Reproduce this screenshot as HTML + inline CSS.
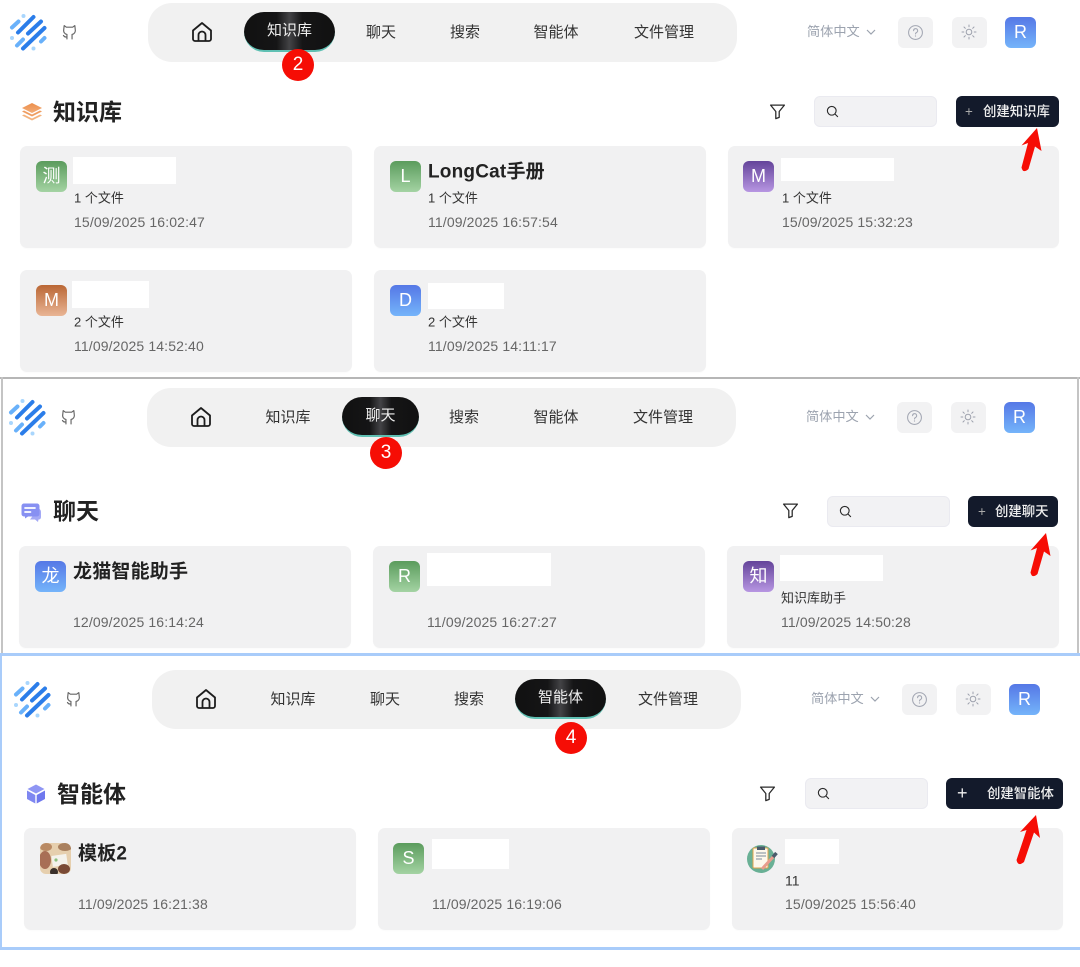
<!DOCTYPE html>
<html lang="zh"><head><meta charset="utf-8"><title>知识库</title>
<style>
html,body{margin:0;padding:0;background:#fff}
body{width:1080px;height:952px;position:relative;overflow:hidden;font-family:"Liberation Sans","Noto Sans CJK SC",sans-serif;color:#222}
.a,.a>*{position:absolute}
.a{left:0;top:0;width:1080px;height:300px}
.pill{left:148px;top:3px;width:589px;height:59px;background:#f1f1f1;border-radius:24px}
.n{top:22px;font-size:15px;line-height:20px;color:#333;transform:translate(-50%,1px);white-space:nowrap}
.act{top:12px;height:38px;border-radius:20px;background:linear-gradient(90deg,#111 0,#151516 36%,#434346 50%,#151516 64%,#111 100%);border-bottom:2px solid #5fc0b3;color:#eee;font-size:15px;line-height:38px;text-align:center}
.dot{width:32px;height:32px;border-radius:50%;background:#f60d05;color:#fff;font-size:19px;line-height:32px;text-align:center}
.lang{left:807px;top:22px;font-size:13.2px;line-height:20px;color:#9ca3af;white-space:nowrap}
.box{top:17px;width:35px;height:31px;background:#f2f2f3;border-radius:6px}
.r{left:1005px;top:17px;width:31px;height:31px;border-radius:6px;background:linear-gradient(180deg,#5578e6,#74b4fa);color:#fff;font-size:18px;line-height:31px;text-align:center}
.card{position:absolute;width:332px;height:102px;background:#f1f1f2;border-radius:7px;box-shadow:0 1px 1px rgba(0,0,0,.015)}
.av{position:absolute;width:31px;height:31px;border-radius:6px;color:#fff;font-size:18px;line-height:31px;text-align:center}
.g{background:linear-gradient(180deg,#5b9c5d,#a4d3a3)}
.p{background:linear-gradient(180deg,#64449a,#b796e2)}
.o{background:linear-gradient(180deg,#ba6735,#e9b595)}
.b{background:linear-gradient(180deg,#5578e6,#74b4fa)}
.w{position:absolute;background:#fff}
.ti{position:absolute;font-size:19px;font-weight:700;line-height:26px;color:#222;white-space:nowrap;letter-spacing:.2px;transform:translateY(1.5px)}
.m{position:absolute;font-size:13px;line-height:18px;color:#333;white-space:nowrap;transform:translateY(.5px)}
.d{position:absolute;font-size:14px;letter-spacing:.13px;line-height:18px;color:#666;white-space:nowrap}
.h{position:absolute;font-size:23px;font-weight:700;line-height:30px;color:#222;white-space:nowrap}
.s{position:absolute;width:123px;height:31px;box-sizing:border-box;background:#f2f2f4;border:1px solid #eaeaf0;border-radius:6px}
.btn{position:absolute;height:31px;background:#131a2b;border-radius:6px;color:#f0f0f0;font-size:13.4px;font-weight:500;line-height:31px;white-space:nowrap}
.btn span{position:absolute;top:0}
svg{position:absolute;overflow:visible}
</style></head><body>
<svg width="0" height="0" style="left:0;top:0">
<symbol id="logo" viewBox="0 0 50 60" overflow="visible"><g stroke-linecap="round" fill="none" stroke-width="4"><path d="M18 32.500 33.500 17M28 33.500 41 21.500M23 48.500 44.500 28" stroke="#2b7de9"/><path d="M12 27.500 18.500 21.500M17 45.500 23 39.500M41 41.500 44.500 38" stroke="#69b1fa"/></g><circle cx="23.500" cy="16" r="2" fill="#a9d6fd"/><circle cx="12" cy="38" r="2" fill="#a9d6fd"/><circle cx="33.500" cy="48.500" r="2" fill="#a9d6fd"/></symbol>
<symbol id="gh" viewBox="0 0 16 16" overflow="visible"><path d="M3 1.500 5 3h6l2-1.500.4 3.500c.6 2.500-.8 4.500-3 4.800V14M3 1.500 2.600 5c-.6 2.500.8 4.500 3 4.800V14M5.600 12C4 12.600 3 12 2.300 10.800" fill="none" stroke="#666" stroke-width="1.100" stroke-linejoin="round" stroke-linecap="round"/></symbol>
<symbol id="home" viewBox="0 0 22 22" overflow="visible"><path d="M2 9.500 11 2l9 7.500V18a2 2 0 0 1-2 2H4a2 2 0 0 1-2-2zM7.500 20v-6a3.500 3.500 0 0 1 7 0v6" fill="none" stroke="#1d1d1d" stroke-width="1.800" stroke-linejoin="round"/></symbol>
<symbol id="help" viewBox="0 0 16 16" overflow="visible"><circle cx="8" cy="8" r="6.500" fill="none" stroke="#a3a7b3" stroke-width="1"/><path d="M6.200 6.300A1.900 1.900 0 1 1 8.900 8c-.6.400-.9.700-.9 1.400" fill="none" stroke="#a3a7b3" stroke-width="1" stroke-linecap="round"/><circle cx="8" cy="11.300" r=".6" fill="#a3a7b3"/></symbol>
<symbol id="sun" viewBox="0 0 16 16" overflow="visible"><circle cx="8" cy="8" r="2.800" fill="none" stroke="#9ca0ac" stroke-width="1"/><path d="M8 1v1.800M8 13.200V15M1 8h1.800M13.200 8H15M3 3l1.300 1.300M11.700 11.700 13 13M3 13l1.300-1.300M11.700 4.300 13 3" stroke="#9ca0ac" stroke-width="1" stroke-linecap="round"/></symbol>
<symbol id="filter" viewBox="0 0 16 16" overflow="visible"><path d="M1.500 2h13L9.600 8v5.500l-3.200 1.200V8z" fill="none" stroke="#2a2a2a" stroke-width="1.200" stroke-linejoin="round"/></symbol>
<symbol id="search" viewBox="0 0 14 14" overflow="visible"><circle cx="6.200" cy="6.200" r="4.700" fill="none" stroke="#2a2a2a" stroke-width="1.200"/><path d="m9.800 9.800 2.700 2.700" stroke="#2a2a2a" stroke-width="1.200" stroke-linecap="round"/></symbol>
</svg>

<!-- Section borders -->
<div style="position:absolute;left:0;top:377px;width:1080px;height:2px;background:#b6b6b6"></div>
<div style="position:absolute;left:1px;top:377px;width:2px;height:277px;background:#c4c4c4"></div>
<div style="position:absolute;left:1077px;top:377px;width:2px;height:277px;background:#c4c4c4"></div>
<div style="position:absolute;left:0;top:653px;width:1080px;height:3px;background:#a9ccfa"></div>
<div style="position:absolute;left:0;top:653px;width:2px;height:297px;background:#a9ccfa"></div>
<div style="position:absolute;left:0;top:947px;width:1080px;height:3px;background:#a9ccfa"></div>

<!-- Header 1 -->
<div class="a">
<svg style="left:0;top:0" width="50" height="60"><use href="#logo" width="50" height="60"/></svg>
<svg style="left:61px;top:24px" width="17" height="17"><use href="#gh" width="17" height="17"/></svg>
<div class="pill"></div>
<svg style="left:191px;top:21px" width="22" height="22"><use href="#home" width="22" height="22"/></svg>
<div class="act" style="left:244px;width:91px">知识库</div>
<div class="n" style="left:381px">聊天</div><div class="n" style="left:465px">搜索</div><div class="n" style="left:556px">智能体</div><div class="n" style="left:664px">文件管理</div>
<div class="dot" style="left:282px;top:49px">2</div>
<div class="lang">简体中文</div><svg style="left:866px;top:29px" width="10" height="6"><path d="M1 1l4 4 4-4" fill="none" stroke="#9ca3af" stroke-width="1.200"/></svg>
<div class="box" style="left:898px"></div><svg style="left:907px;top:24px" width="17" height="17"><use href="#help" width="17" height="17"/></svg>
<div class="box" style="left:952px"></div><svg style="left:961px;top:24px" width="16" height="16"><use href="#sun" width="16" height="16"/></svg>
<div class="r">R</div>
</div>

<!-- Header 2 -->
<div class="a" style="left:-1px;top:385px">
<svg style="left:0;top:0" width="50" height="60"><use href="#logo" width="50" height="60"/></svg>
<svg style="left:61px;top:24px" width="17" height="17"><use href="#gh" width="17" height="17"/></svg>
<div class="pill"></div>
<svg style="left:191px;top:21px" width="22" height="22"><use href="#home" width="22" height="22"/></svg>
<div class="n" style="left:289px">知识库</div>
<div class="act" style="left:343px;width:77px">聊天</div>
<div class="n" style="left:465px">搜索</div><div class="n" style="left:557px">智能体</div><div class="n" style="left:664px">文件管理</div>
<div class="dot" style="left:371px;top:52px">3</div>
<div class="lang">简体中文</div><svg style="left:866px;top:29px" width="10" height="6"><path d="M1 1l4 4 4-4" fill="none" stroke="#9ca3af" stroke-width="1.200"/></svg>
<div class="box" style="left:898px"></div><svg style="left:907px;top:24px" width="17" height="17"><use href="#help" width="17" height="17"/></svg>
<div class="box" style="left:952px"></div><svg style="left:961px;top:24px" width="16" height="16"><use href="#sun" width="16" height="16"/></svg>
<div class="r">R</div>
</div>

<!-- Header 3 -->
<div class="a" style="left:4px;top:667px">
<svg style="left:0;top:0" width="50" height="60"><use href="#logo" width="50" height="60"/></svg>
<svg style="left:61px;top:24px" width="17" height="17"><use href="#gh" width="17" height="17"/></svg>
<div class="pill"></div>
<svg style="left:191px;top:21px" width="22" height="22"><use href="#home" width="22" height="22"/></svg>
<div class="n" style="left:289px">知识库</div><div class="n" style="left:381px">聊天</div><div class="n" style="left:465px">搜索</div>
<div class="act" style="left:511px;width:91px">智能体</div>
<div class="n" style="left:664px">文件管理</div>
<div class="dot" style="left:551px;top:55px">4</div>
<div class="lang">简体中文</div><svg style="left:866px;top:29px" width="10" height="6"><path d="M1 1l4 4 4-4" fill="none" stroke="#9ca3af" stroke-width="1.200"/></svg>
<div class="box" style="left:898px"></div><svg style="left:907px;top:24px" width="17" height="17"><use href="#help" width="17" height="17"/></svg>
<div class="box" style="left:952px"></div><svg style="left:961px;top:24px" width="16" height="16"><use href="#sun" width="16" height="16"/></svg>
<div class="r">R</div>
</div>

<!-- Page head 1 -->
<svg style="left:22px;top:103px" width="20" height="18" viewBox="0 0 20 18"><defs><linearGradient id="og" x1="0" y1="0" x2="0" y2="1"><stop offset="0" stop-color="#ec8f4c"/><stop offset="1" stop-color="#f3ac76"/></linearGradient></defs><path d="M10 0 20 5 10 10 0 5z" fill="url(#og)"/><path d="M2 7.500 0 8.500 10 13.500 20 8.500 18 7.500 10 11.500z" fill="#ef9d60"/><path d="M2 11.500 0 12.500 10 17.500 20 12.500 18 11.500 10 15.500z" fill="#f3b27d"/></svg>
<div class="h" style="left:53px;top:96.500px">知识库</div>
<svg style="left:769px;top:103px" width="17" height="17"><use href="#filter" width="17" height="17"/></svg>
<div class="s" style="left:814px;top:96px"></div><svg style="left:826px;top:105px" width="13" height="13"><use href="#search" width="13" height="13"/></svg>
<div class="btn" style="left:956px;top:96px;width:103px"><span style="left:9px;color:#aaa">+</span><span style="left:27px">创建知识库</span></div>

<!-- Cards 1 -->
<div class="card" style="left:20px;top:146px"></div>
<div class="card" style="left:374px;top:146px"></div>
<div class="card" style="left:728px;top:146px;width:331px"></div>
<div class="card" style="left:20px;top:270px"></div>
<div class="card" style="left:374px;top:270px"></div>
<div class="av g" style="left:36px;top:161px">测</div><div class="w" style="left:73px;top:157px;width:103px;height:27px"></div>
<div class="m" style="left:74px;top:189px">1 个文件</div><div class="d" style="left:74px;top:213px">15/09/2025 16:02:47</div>
<div class="av g" style="left:390px;top:161px">L</div><div class="ti" style="left:428px;top:158px">LongCat手册</div>
<div class="m" style="left:428px;top:189px">1 个文件</div><div class="d" style="left:428px;top:213px">11/09/2025 16:57:54</div>
<div class="av p" style="left:743px;top:161px">M</div><div class="w" style="left:781px;top:158px;width:113px;height:23px"></div>
<div class="m" style="left:782px;top:189px">1 个文件</div><div class="d" style="left:782px;top:213px">15/09/2025 15:32:23</div>
<div class="av o" style="left:36px;top:285px">M</div><div class="w" style="left:72px;top:281px;width:77px;height:27px"></div>
<div class="m" style="left:74px;top:313px">2 个文件</div><div class="d" style="left:74px;top:337px">11/09/2025 14:52:40</div>
<div class="av b" style="left:390px;top:285px">D</div><div class="w" style="left:428px;top:283px;width:76px;height:26px"></div>
<div class="m" style="left:428px;top:313px">2 个文件</div><div class="d" style="left:428px;top:337px">11/09/2025 14:11:17</div>

<!-- Page head 2 -->
<svg style="left:21px;top:503px" width="20" height="20" viewBox="0 0 20 20"><path d="M17 6h1.500Q20 7 20 9v5q0 2.500-2.500 2.500l-.5 2.500-3-2.500H9z" fill="#a4a9f5"/><path d="M3 .5h13A2.500 2.500 0 0 1 18.500 3v8A2.500 2.500 0 0 1 16 13.500H7l-3 2v-2H3A2.500 2.500 0 0 1 .5 11V3A2.500 2.500 0 0 1 3 .5z" fill="#8790f2"/><path d="M4 5h10M4 9h5.500" stroke="#fff" stroke-width="1.700" stroke-linecap="round"/></svg>
<div class="h" style="left:53px;top:495.500px">聊天</div>
<svg style="left:782px;top:502px" width="17" height="17"><use href="#filter" width="17" height="17"/></svg>
<div class="s" style="left:827px;top:496px"></div><svg style="left:839px;top:505px" width="13" height="13"><use href="#search" width="13" height="13"/></svg>
<div class="btn" style="left:968px;top:496px;width:90px"><span style="left:10px;color:#aaa">+</span><span style="left:27px">创建聊天</span></div>

<!-- Cards 2 -->
<div class="card" style="left:19px;top:546px"></div>
<div class="card" style="left:373px;top:546px"></div>
<div class="card" style="left:727px;top:546px"></div>
<div class="av b" style="left:35px;top:561px">龙</div><div class="ti" style="left:73px;top:558px">龙猫智能助手</div><div class="d" style="left:73px;top:613px">12/09/2025 16:14:24</div>
<div class="av g" style="left:389px;top:561px">R</div><div class="w" style="left:427px;top:553px;width:124px;height:33px"></div><div class="d" style="left:427px;top:613px">11/09/2025 16:27:27</div>
<div class="av p" style="left:743px;top:561px">知</div><div class="w" style="left:780px;top:555px;width:103px;height:26px"></div>
<div class="m" style="left:781px;top:589px">知识库助手</div><div class="d" style="left:781px;top:613px">11/09/2025 14:50:28</div>

<!-- Page head 3 -->
<svg style="left:26px;top:784px" width="20" height="20" viewBox="0 0 20 20"><path d="M10 .5 18.500 5 10 9.500 1.500 5z" fill="#8f96f4"/><path d="M1 6.500 9.300 11V19.500L1 15z" fill="#7f87f1"/><path d="M19 6.500 10.700 11V19.500L19 15z" fill="#6f78ee"/></svg>
<div class="h" style="left:57px;top:778.500px">智能体</div>
<svg style="left:759px;top:785px" width="17" height="17"><use href="#filter" width="17" height="17"/></svg>
<div class="s" style="left:805px;top:778px"></div><svg style="left:817px;top:787px" width="13" height="13"><use href="#search" width="13" height="13"/></svg>
<div class="btn" style="left:946px;top:778px;width:117px"><span style="left:11px;font-size:18px">+</span><span style="left:41px">创建智能体</span></div>

<!-- Cards 3 -->
<div class="card" style="left:24px;top:828px"></div>
<div class="card" style="left:378px;top:828px"></div>
<div class="card" style="left:732px;top:828px;width:331px"></div>
<svg style="left:40px;top:843px" width="31" height="31" viewBox="0 0 31 31"><defs><clipPath id="cp"><rect width="31" height="31" rx="6"/></clipPath></defs><g clip-path="url(#cp)"><rect width="31" height="31" fill="#e6cfae"/><rect x="12" y="12" width="15" height="11" fill="#f4f2ec" transform="rotate(-8 19 17)"/><ellipse cx="5" cy="17" rx="6" ry="9" fill="#a86f55"/><ellipse cx="24" cy="26" rx="6" ry="5" fill="#7a4a36"/><ellipse cx="6" cy="4" rx="6" ry="4" fill="#b98a64"/><ellipse cx="25" cy="4" rx="7" ry="4" fill="#a9805f"/><circle cx="14" cy="29" r="4" fill="#3a302b"/><circle cx="16" cy="17" r="1.600" fill="#8cbf7d"/></g></svg>
<div class="ti" style="left:78px;top:840px">模板2</div><div class="d" style="left:78px;top:895px">11/09/2025 16:21:38</div>
<div class="av g" style="left:393px;top:843px">S</div><div class="w" style="left:432px;top:839px;width:77px;height:30px"></div><div class="d" style="left:432px;top:895px">11/09/2025 16:19:06</div>
<svg style="left:747px;top:845px" width="32" height="30" viewBox="0 0 32 30"><circle cx="14" cy="14" r="14" fill="#69b095"/><rect x="6" y="3" width="15" height="20" rx="1" fill="#fdf8ec" stroke="#e2a34b" stroke-width="1"/><rect x="10" y="1.500" width="8" height="3.500" fill="#4a5a6a"/><path d="M9 8h10M9 11h10M9 14h6" stroke="#7c8a9a" stroke-width="1"/><path d="M15 24 27 11" stroke="#e89c8c" stroke-width="3"/><path d="M26 12 29.500 8" stroke="#4a5a6a" stroke-width="3.500"/></svg>
<div class="w" style="left:785px;top:839px;width:54px;height:25px"></div>
<div class="m" style="left:785px;top:871px;font-size:14px">11</div><div class="d" style="left:785px;top:895px">15/09/2025 15:56:40</div>

<!-- Red arrows, painted above the cards -->
<svg style="left:0;top:0" width="1080" height="952" viewBox="0 0 1080 952">
<path d="M1037 128 1041.500 151 1035 146.500 1028.500 169Q1023 174 1021.500 167.500L1028 143 1021.500 145.500z" fill="#f60d05"/>
<path d="M1037 128 1041.500 151 1035 146.500 1028.500 169Q1023 174 1021.500 167.500L1028 143 1021.500 145.500z" fill="#f60d05" transform="translate(9 405)"/>
<path d="M1036 815 1040 838 1034 832.500 1024 862Q1018 867 1016.500 860L1026.500 830 1020 832z" fill="#f60d05"/>
</svg>
</body></html>
